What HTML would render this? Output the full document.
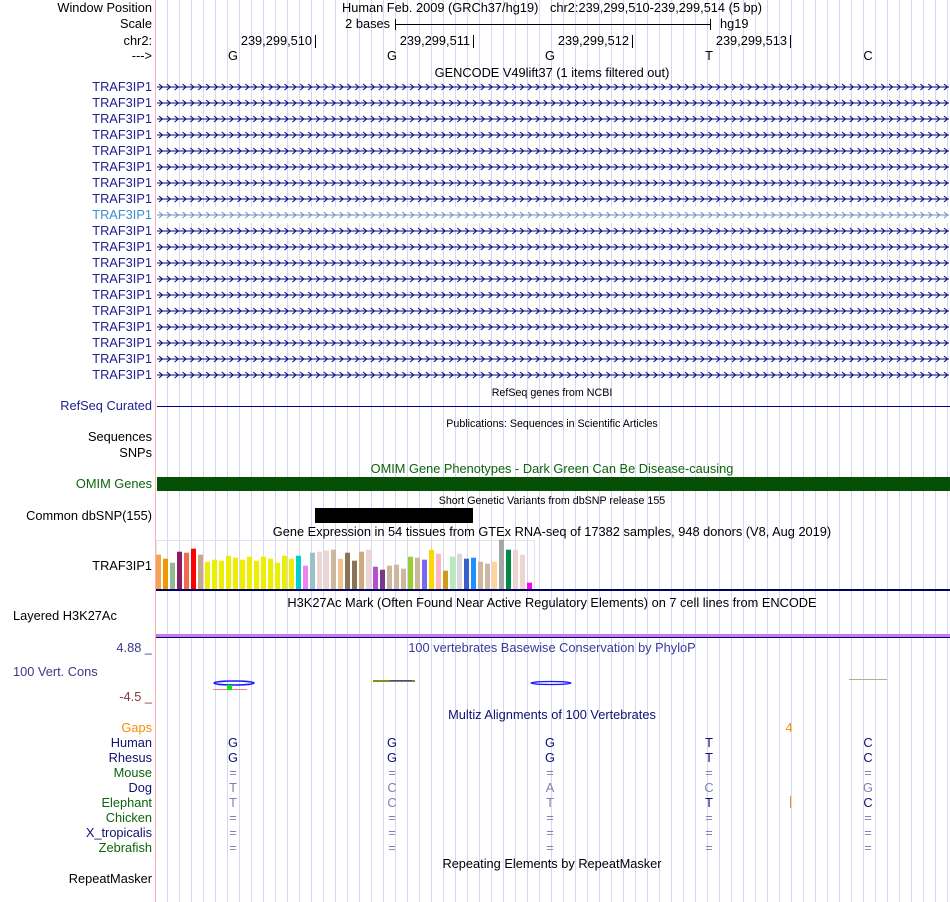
<!DOCTYPE html>
<html><head><meta charset="utf-8"><style>
html,body{margin:0;padding:0;background:#fff;width:950px;height:902px;overflow:hidden}
svg{display:block;font-family:"Liberation Sans",sans-serif}
</style></head><body>
<svg width="950" height="902" viewBox="0 0 950 902" xmlns="http://www.w3.org/2000/svg" font-size="12.8">
<defs>
<pattern id="g" x="167" y="0" width="12" height="10" patternUnits="userSpaceOnUse"><rect width="1" height="10" fill="#d6d6f6"/></pattern>
<pattern id="chev" x="157" y="79" width="7.85" height="16" patternUnits="userSpaceOnUse"><path d="M2 5 L5.5 8 L2 11" fill="none" stroke="#000080" stroke-width="1"/><rect x="0" y="7.5" width="7.85" height="1" fill="#000080"/></pattern>
<pattern id="chev2" x="157" y="79" width="7.85" height="16" patternUnits="userSpaceOnUse"><path d="M2 5 L5.5 8 L2 11" fill="none" stroke="#6a8fc0" stroke-width="1"/><rect x="0" y="7.5" width="7.85" height="1" fill="#6a8fc0"/></pattern>
</defs>
<rect x="156" y="0" width="794" height="902" fill="url(#g)"/>
<rect x="155" y="0" width="1" height="902" fill="#ffb0b0"/>

<g text-anchor="end" fill="#000">
<text x="152" y="12">Window Position</text>
<text x="152" y="28">Scale</text>
<text x="152" y="45">chr2:</text>
<text x="152" y="60">---&gt;</text>
</g>
<text x="342" y="12">Human Feb. 2009 (GRCh37/hg19)</text>
<text x="550" y="12">chr2:239,299,510-239,299,514 (5 bp)</text>
<text x="390" y="28" text-anchor="end">2 bases</text>
<rect x="395" y="19" width="1" height="11" fill="#000"/><rect x="395" y="24" width="316" height="1" fill="#000"/><rect x="710" y="19" width="1" height="11" fill="#000"/>
<text x="720" y="28">hg19</text>
<g text-anchor="end">
<text x="312" y="45">239,299,510</text><rect x="315" y="35" width="1" height="13" fill="#000"/>
<text x="470" y="45">239,299,511</text><rect x="473" y="35" width="1" height="13" fill="#000"/>
<text x="629" y="45">239,299,512</text><rect x="632" y="35" width="1" height="13" fill="#000"/>
<text x="787" y="45">239,299,513</text><rect x="790" y="35" width="1" height="13" fill="#000"/>
</g>
<g text-anchor="middle">
<text x="233" y="60">G</text><text x="392" y="60">G</text><text x="550" y="60">G</text><text x="709" y="60">T</text><text x="868" y="60">C</text>
<text x="552" y="77">GENCODE V49lift37 (1 items filtered out)</text>
</g>

<rect x="157" y="79" width="792" height="304" fill="url(#chev)"/>
<rect x="157" y="207" width="792" height="16" fill="#fff"/>
<rect x="157" y="207" width="792" height="16" fill="url(#chev2)"/>
<g text-anchor="end" fill="#202090">
<text x="152" y="91">TRAF3IP1</text><text x="152" y="107">TRAF3IP1</text><text x="152" y="123">TRAF3IP1</text><text x="152" y="139">TRAF3IP1</text><text x="152" y="155">TRAF3IP1</text><text x="152" y="171">TRAF3IP1</text><text x="152" y="187">TRAF3IP1</text><text x="152" y="203">TRAF3IP1</text><text x="152" y="219" fill="#3b8fcc">TRAF3IP1</text><text x="152" y="235">TRAF3IP1</text><text x="152" y="251">TRAF3IP1</text><text x="152" y="267">TRAF3IP1</text><text x="152" y="283">TRAF3IP1</text><text x="152" y="299">TRAF3IP1</text><text x="152" y="315">TRAF3IP1</text><text x="152" y="331">TRAF3IP1</text><text x="152" y="347">TRAF3IP1</text><text x="152" y="363">TRAF3IP1</text><text x="152" y="379">TRAF3IP1</text>
<text x="152" y="410">RefSeq Curated</text>
</g>
<text x="552" y="396" text-anchor="middle" font-size="10.7">RefSeq genes from NCBI</text>
<rect x="157" y="406" width="793" height="1" fill="#000080"/>
<text x="552" y="427" text-anchor="middle" font-size="10.7">Publications: Sequences in Scientific Articles</text>
<g text-anchor="end">
<text x="152" y="441">Sequences</text><text x="152" y="457">SNPs</text>
<text x="152" y="488" fill="#0c640c">OMIM Genes</text>
<text x="152" y="520">Common dbSNP(155)</text>
<text x="152" y="570">TRAF3IP1</text>
<text x="152" y="652" fill="#3a3a8a">4.88 _</text>
<text x="152" y="701" fill="#8a3a3a">-4.5 _</text>
</g>
<text x="13" y="620">Layered H3K27Ac</text>
<text x="13" y="676" fill="#3a3a8a">100 Vert. Cons</text>
<text x="552" y="473" text-anchor="middle" fill="#0c640c">OMIM Gene Phenotypes - Dark Green Can Be Disease-causing</text>
<rect x="157" y="477" width="793" height="14" fill="#065006"/>
<text x="552" y="504" text-anchor="middle" font-size="10.7">Short Genetic Variants from dbSNP release 155</text>
<rect x="315" y="508" width="158" height="15" fill="#000"/>
<text x="552" y="536" text-anchor="middle">Gene Expression in 54 tissues from GTEx RNA-seq of 17382 samples, 948 donors (V8, Aug 2019)</text>
<rect x="156.5" y="540.5" width="378" height="49" fill="none" stroke="#e4e4e4"/>
<g transform="translate(156 589) scale(1 -1)">
<rect x="0" width="5" height="34.3" fill="#F8A054"/><rect x="7" width="5" height="30.3" fill="#EE9A00"/><rect x="14" width="5" height="26.3" fill="#8FBC8F"/><rect x="21" width="5" height="37.3" fill="#8B1C62"/><rect x="28" width="5" height="36.3" fill="#EE6A50"/><rect x="35" width="5" height="40.3" fill="#FF0000"/><rect x="42" width="5" height="34.3" fill="#C8A88A"/><rect x="49" width="5" height="27.3" fill="#EEEE00"/><rect x="56" width="5" height="29.3" fill="#EEEE00"/><rect x="63" width="5" height="28.3" fill="#EEEE00"/><rect x="70" width="5" height="33.3" fill="#EEEE00"/><rect x="77" width="5" height="31.3" fill="#EEEE00"/><rect x="84" width="5" height="29.3" fill="#EEEE00"/><rect x="91" width="5" height="32.3" fill="#EEEE00"/><rect x="98" width="5" height="28.3" fill="#EEEE00"/><rect x="105" width="5" height="32.3" fill="#EEEE00"/><rect x="112" width="5" height="30.3" fill="#EEEE00"/><rect x="119" width="5" height="26.3" fill="#EEEE00"/><rect x="126" width="5" height="33.3" fill="#EEEE00"/><rect x="133" width="5" height="30.3" fill="#EEEE00"/><rect x="140" width="5" height="33.3" fill="#00CED1"/><rect x="147" width="5" height="23.3" fill="#EE82EE"/><rect x="154" width="5" height="36.3" fill="#9AC0CD"/><rect x="161" width="5" height="37.3" fill="#EED5D2"/><rect x="168" width="5" height="38.3" fill="#EED5D2"/><rect x="175" width="5" height="39.3" fill="#CDB79E"/><rect x="182" width="5" height="30.3" fill="#EEC591"/><rect x="189" width="5" height="36.3" fill="#8B7355"/><rect x="196" width="5" height="28.3" fill="#8B7355"/><rect x="203" width="5" height="37.3" fill="#CDAA7D"/><rect x="210" width="5" height="39.3" fill="#EED5D2"/><rect x="217" width="5" height="22.3" fill="#B452CD"/><rect x="224" width="5" height="19.3" fill="#7A378B"/><rect x="231" width="5" height="23.3" fill="#CDB79E"/><rect x="238" width="5" height="24.3" fill="#CDB79E"/><rect x="245" width="5" height="20.3" fill="#CDB79E"/><rect x="252" width="5" height="32.3" fill="#9ACD32"/><rect x="259" width="5" height="31.3" fill="#CDB79E"/><rect x="266" width="5" height="29.3" fill="#7B68EE"/><rect x="273" width="5" height="39.3" fill="#FFD700"/><rect x="280" width="5" height="35.3" fill="#FFB6C1"/><rect x="287" width="5" height="18.3" fill="#CD9B1D"/><rect x="294" width="5" height="32.3" fill="#B4EEB4"/><rect x="301" width="5" height="35.3" fill="#D9D9D9"/><rect x="308" width="5" height="30.3" fill="#3A5FCD"/><rect x="315" width="5" height="31.3" fill="#1E90FF"/><rect x="322" width="5" height="27.3" fill="#CDB79E"/><rect x="329" width="5" height="25.3" fill="#CDB79E"/><rect x="336" width="5" height="27.3" fill="#FFD39B"/><rect x="343" width="5" height="49.3" fill="#A6A6A6"/><rect x="350" width="5" height="39.3" fill="#008B45"/><rect x="357" width="5" height="39.3" fill="#EED5D2"/><rect x="364" width="5" height="34.3" fill="#EED5D2"/><rect x="371" width="5" height="6.3" fill="#FF00FF"/>
</g>
<rect x="156" y="589" width="794" height="2" fill="#000060"/>
<text x="552" y="607" text-anchor="middle">H3K27Ac Mark (Often Found Near Active Regulatory Elements) on 7 cell lines from ENCODE</text>
<rect x="156" y="634" width="794" height="3" fill="#c878f0"/>
<rect x="156" y="637" width="794" height="1" fill="#000060"/>
<text x="552" y="652" text-anchor="middle" fill="#3a3a9a">100 vertebrates Basewise Conservation by PhyloP</text>
<g>
<ellipse cx="234" cy="683" rx="20" ry="2" fill="none" stroke="#1a1aff" stroke-width="1.5"/>
<rect x="213" y="689" width="34" height="1" fill="#f08080"/>
<rect x="227" y="685" width="5" height="5" fill="#00ee00"/>
<rect x="373" y="680" width="42" height="2" fill="#8a8a20"/><rect x="390" y="680" width="22" height="1" fill="#4040d0"/>
<ellipse cx="551" cy="683" rx="20" ry="1.5" fill="none" stroke="#1a1aff" stroke-width="1.3"/>
<rect x="849" y="679" width="38" height="1" fill="#b0b080"/>
</g>
<text x="552" y="719" text-anchor="middle" fill="#101070">Multiz Alignments of 100 Vertebrates</text>
<g text-anchor="end">
<text x="152" y="732" fill="#f0900a">Gaps</text>
<text x="152" y="747" fill="#101070">Human</text>
<text x="152" y="762" fill="#101070">Rhesus</text>
<text x="152" y="777" fill="#0c640c">Mouse</text>
<text x="152" y="792" fill="#101070">Dog</text>
<text x="152" y="807" fill="#0c640c">Elephant</text>
<text x="152" y="822" fill="#0c640c">Chicken</text>
<text x="152" y="837" fill="#101070">X_tropicalis</text>
<text x="152" y="852" fill="#0c640c">Zebrafish</text>
<text x="152" y="883" fill="#000">RepeatMasker</text>
</g>
<text x="789" y="732" text-anchor="middle" fill="#f0900a">4</text>
<g text-anchor="middle" fill="#101070">
<text x="233" y="747">G</text><text x="392" y="747">G</text><text x="550" y="747">G</text><text x="709" y="747">T</text><text x="868" y="747">C</text>
<text x="233" y="762">G</text><text x="392" y="762">G</text><text x="550" y="762">G</text><text x="709" y="762">T</text><text x="868" y="762">C</text>
<text x="709" y="807">T</text><text x="868" y="807">C</text>
</g>
<g text-anchor="middle" fill="#8080b8">
<text x="233" y="777">=</text><text x="392" y="777">=</text><text x="550" y="777">=</text><text x="709" y="777">=</text><text x="868" y="777">=</text>
<text x="233" y="792">T</text><text x="392" y="792">C</text><text x="550" y="792">A</text><text x="709" y="792">C</text><text x="868" y="792">G</text>
<text x="233" y="807">T</text><text x="392" y="807">C</text><text x="550" y="807">T</text>
<text x="233" y="822">=</text><text x="392" y="822">=</text><text x="550" y="822">=</text><text x="709" y="822">=</text><text x="868" y="822">=</text>
<text x="233" y="837">=</text><text x="392" y="837">=</text><text x="550" y="837">=</text><text x="709" y="837">=</text><text x="868" y="837">=</text>
<text x="233" y="852">=</text><text x="392" y="852">=</text><text x="550" y="852">=</text><text x="709" y="852">=</text><text x="868" y="852">=</text>
</g>
<rect x="790" y="796" width="1" height="12" fill="#f0900a"/>
<text x="552" y="868" text-anchor="middle">Repeating Elements by RepeatMasker</text>
</svg>
</body></html>
